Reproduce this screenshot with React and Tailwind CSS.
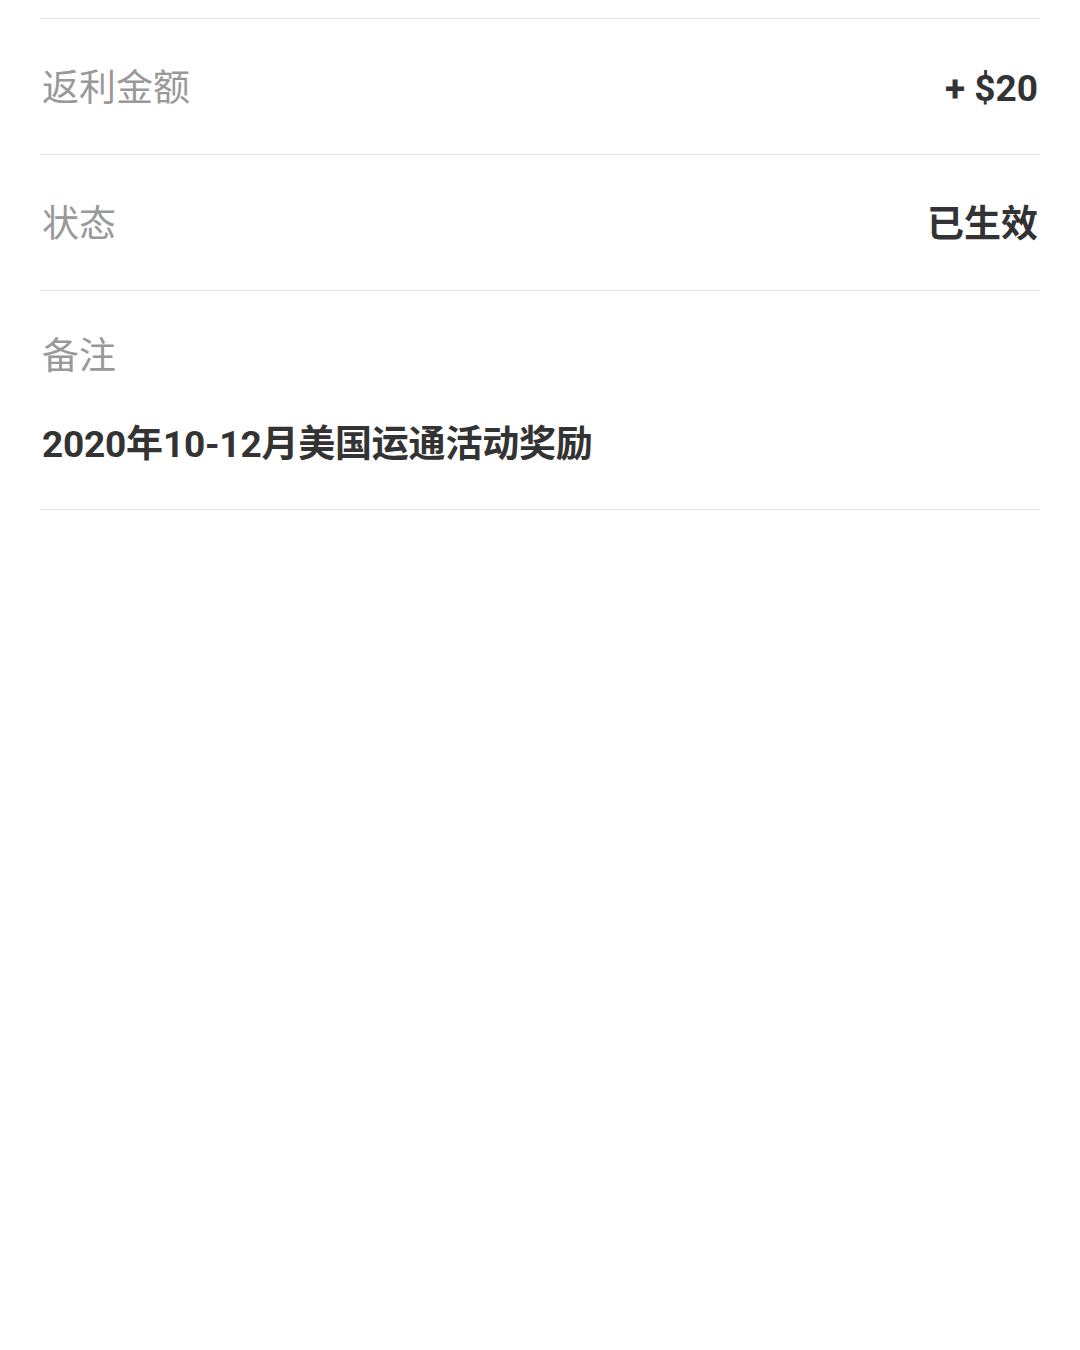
import React from 'react'

const font = { fontFamily: 'Roboto, "Noto Sans CJK SC", sans-serif' }

function Row({ label, value }) {
  return (
    <div className="flex items-center justify-between h-[136px] pt-[5px] px-[2px] border-t border-[#e6e6e6]">
      <span className="text-[37px] leading-[50px] text-[#999999]">{label}</span>
      <span className="text-[37px] leading-[50px] font-bold text-[#333333]">{value}</span>
    </div>
  )
}

export default function App() {
  return (
    <div className="min-h-[1350px] bg-white" style={font}>
      <div className="mx-[40px] pt-[18px]">
        <Row label="返利金额" value="+ $20" />
        <Row label="状态" value="已生效" />
        <div className="border-t border-b border-[#e6e6e6] px-[2px] pt-[41px] pb-[39px]">
          <div className="text-[37px] leading-[50px] text-[#999999]">备注</div>
          <div className="mt-[38px] text-[37px] leading-[50px] font-bold text-[#333333] tracking-[-0.2px]">
            2020年10-12月美国运通活动奖励
          </div>
        </div>
      </div>
    </div>
  )
}
